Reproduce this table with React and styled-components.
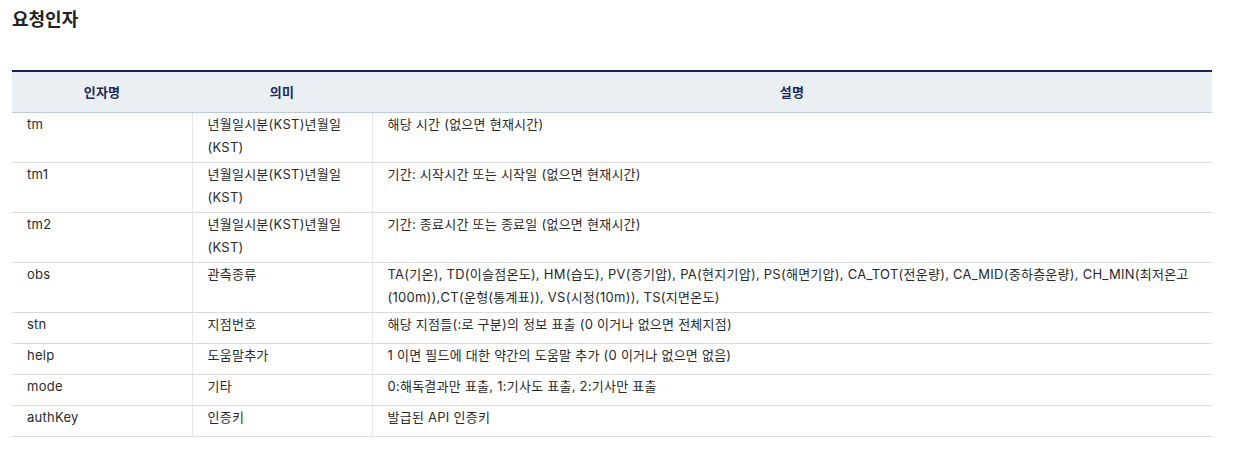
import React from 'react';
import styled, {createGlobalStyle} from "styled-components";

const GlobalStyle = createGlobalStyle`
  body {
    margin: 0;
    background: #fff;
    font-family: Inter, "Noto Sans CJK KR", sans-serif;
    color: #333;
  }
`;

const Page = styled.div`
  padding: 8px 12px;
  width: 1200px;
`;

const Title = styled.h3`
  margin: 0 0 38px;
  font-size: 18px;
  font-weight: 700;
  line-height: 24px;
  color: #222;
`;

const Table = styled.table`
  width: 1200px;
  border-collapse: collapse;
  table-layout: fixed;
  border-top: 2px solid #1c215e;
  font-size: 13px;
  letter-spacing: 0.25px;
`;

const HeadCell = styled.th`
  height: 41px;
  padding: 0;
  background: #eaeff4;
  border-bottom: 1px solid #bccbdc;
  color: #1a2a5a;
  font-weight: 700;
  text-align: center;
  vertical-align: middle;
  box-sizing: border-box;
`;

const Row = styled.tr`
  border-bottom: 1px solid #dcdcdc;
`;

const Cell = styled.td`
  height: 27px;
  padding: 0 14px 3px 15px;
  line-height: 23px;
  vertical-align: top;
  color: #2a2a2a;
  border-left: ${p => (p.$first ? 'none' : '1px solid #e6e6e6')};
`;

const params = [
    ['tm', '년월일시분(KST)년월일(KST)', '해당 시간 (없으면 현재시간)'],
    ['tm1', '년월일시분(KST)년월일(KST)', '기간: 시작시간 또는 시작일 (없으면 현재시간)'],
    ['tm2', '년월일시분(KST)년월일(KST)', '기간: 종료시간 또는 종료일 (없으면 현재시간)'],
    ['obs', '관측종류', 'TA(기온), TD(이슬점온도), HM(습도), PV(증기압), PA(현지기압), PS(해면기압), CA_TOT(전운량), CA_MID(중하층운량), CH_MIN(최저온고(100m)),CT(운형(통계표)), VS(시정(10m)), TS(지면온도)'],
    ['stn', '지점번호', '해당 지점들(:로 구분)의 정보 표출 (0 이거나 없으면 전체지점)'],
    ['help', '도움말추가', '1 이면 필드에 대한 약간의 도움말 추가 (0 이거나 없으면 없음)'],
    ['mode', '기타', '0:해독결과만 표출, 1:기사도 표출, 2:기사만 표출'],
    ['authKey', '인증키', '발급된 API 인증키'],
];

const App = () => {
    return (
        <Page>
            <GlobalStyle/>
            <Title>요청인자</Title>
            <Table>
                <colgroup>
                    <col style={{width: 180}}/>
                    <col style={{width: 180}}/>
                    <col/>
                </colgroup>
                <thead>
                <tr>
                    <HeadCell>인자명</HeadCell>
                    <HeadCell>의미</HeadCell>
                    <HeadCell>설명</HeadCell>
                </tr>
                </thead>
                <tbody>
                {params.map(([name, meaning, desc]) => (
                    <Row key={name}>
                        <Cell $first>{name}</Cell>
                        <Cell>{meaning}</Cell>
                        <Cell>{desc}</Cell>
                    </Row>
                ))}
                </tbody>
            </Table>
        </Page>
    )
};

export default App;
